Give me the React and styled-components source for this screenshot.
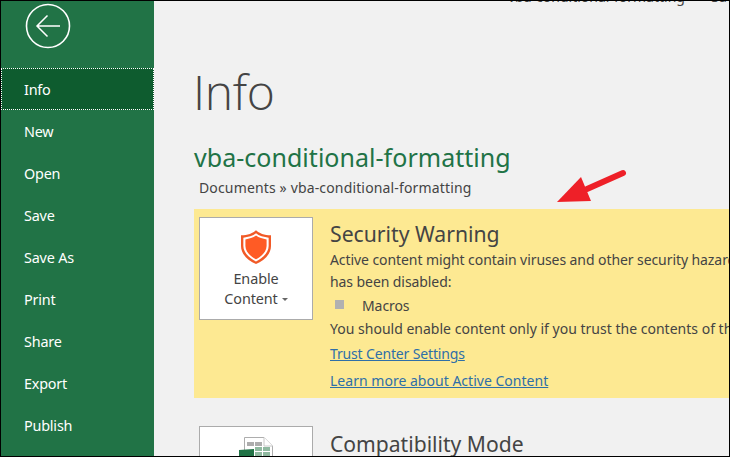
import React from "react";
import styled, { createGlobalStyle } from "styled-components";

const Global = createGlobalStyle`
  html, body { margin: 0; padding: 0; background: #000; }
  * { box-sizing: border-box; }
`;
const FONT = `"Noto Sans", "Open Sans", sans-serif`;

const Frame = styled.div`
  width: 730px; height: 457px; display: flex; overflow: hidden;
  padding: 1px; background: #000; font-family: ${FONT};
`;
const Sidebar = styled.nav`
  width: 153px; flex: none; background: #217346; display: flex; flex-direction: column;
`;
const BackWrap = styled.div`
  height: 67px; flex: none; padding: 2px 0 0 24px;
`;
const NavItem = styled.div`
  height: 42px; flex: none; display: flex; align-items: center; padding-left: 23px;
  color: #fff; font-size: 14.4px; letter-spacing: -0.2px;
  ${p => p.$active && `background: #0e5c2f; outline: 1px dotted #fff; outline-offset: -1px;`}
`;
const Main = styled.main`
  flex: 1; min-width: 0; background: #f1f1f1; overflow: hidden; display: flex; flex-direction: column;
`;
const TitleStrip = styled.div`
  height: 6px; flex: none; overflow: hidden; display: flex; align-items: flex-end;
  padding-left: 354px; color: #444; font-size: 14px; line-height: 14px;
`;
const TitleInner = styled.span`
  display: block; height: 14px; flex: none; margin-bottom: 3px; white-space: pre;
`;
const Content = styled.div`
  padding: 55px 0 0 40px; display: flex; flex-direction: column; width: 700px; position: relative;
`;
const H1 = styled.h1`
  margin: 0 0 0 -1px; font-weight: 300; font-family: "Open Sans", ${FONT}; font-size: 48px; line-height: 60px; color: #444; letter-spacing: -0.4px;
`;
const Doc = styled.div`
  margin-top: 18px; color: #217346; font-size: 25px; line-height: 34px; letter-spacing: 0.03px;
`;
const Crumb = styled.div`
  margin: 4px 0 0 5px; color: #444; font-size: 14px; line-height: 20px; letter-spacing: 0.15px;
`;
const Panel = styled.section`
  margin-top: 11px; height: 189px; background: #fde992; display: flex; padding: 8px 0 0 5px;
`;
const ActionButton = styled.div`
  width: 114px; height: 103px; flex: none; background: #fff; border: 1px solid #ababab;
  display: flex; flex-direction: column; align-items: center; padding-top: 12px;
  color: #444; font-size: 14.4px; line-height: 20px; text-align: center; letter-spacing: -0.1px;
`;
const ButtonLabel = styled.div`
  margin-top: 5px;
`;
const Caret = styled.span`
  display: inline-block; margin-left: 4px; vertical-align: 3px;
  border-left: 3px solid transparent; border-right: 3px solid transparent; border-top: 3px solid #666;
`;
const Details = styled.div`
  margin-left: 17px; width: 420px; white-space: nowrap; color: #444; flex: none;
`;
const WarnTitle = styled.div`
  font-size: 21.2px; line-height: 30px; margin-top: 2px;
`;
const Para = styled.div`
  font-size: 14px; line-height: 22px; letter-spacing: ${p => p.$track || -0.08}px;
  margin-top: ${p => p.$gap || 0}px;
`;
const Bullet = styled.div`
  display: flex; align-items: center; font-size: 14px; line-height: 18px; height: 18px; margin: 4px 0 0 5px; letter-spacing: -0.08px;
`;
const Square = styled.span`
  width: 9px; height: 9px; background: #b1b1b1; margin-right: 18px; flex: none; position: relative; top: -1.5px;
`;
const LinkText = styled.a`
  display: block; color: #2f6fa8; text-decoration: underline; font-size: 14px; line-height: 18px; letter-spacing: ${p => p.$track}px;
  margin-top: ${p => p.$gap}px;
`;
const Panel2 = styled.section`
  margin-top: 28px; display: flex; padding-left: 5px;
`;
const Button2 = styled.div`
  width: 114px; height: 60px; flex: none; background: #fff; border: 1px solid #ababab;
  display: flex; justify-content: center; padding-top: 10px;
`;
const Compat = styled.div`
  margin: 3px 0 0 17px; font-size: 21.1px; line-height: 30px; color: #444; white-space: nowrap;
`;
const ArrowMark = styled.svg`
  position: absolute; left: 396px; top: 158px;
`;

const Back = () => (
  <svg width="46" height="46" viewBox="0 0 46 46" fill="none" stroke="#fff" style={{ display: "block" }}>
    <circle cx="23" cy="23" r="21.5" strokeWidth="1.6" />
    <path d="M12.5 23H35M22.5 12.5 12 23l10.5 10.5" strokeWidth="1.5" />
  </svg>
);
const Shield = () => (
  <svg width="30" height="34" viewBox="0 0 32 36" style={{ flex: "none" }}>
    <path d="M16 0 C19 3 25 5.5 32 5.5 V17 C32 26 24 33 16 36 C8 33 0 26 0 17 V5.5 C7 5.5 13 3 16 0Z" fill="#f15a27" />
    <path d="M16 3.4 C19 6 24.5 7.6 29.5 8 V17 C29.5 24 22.5 30.5 16 33.4 C9.5 30.5 2.5 24 2.5 17 V8 C7.5 7.6 13 6 16 3.4Z" fill="#fff" />
    <path d="M16 5.8 C19 8 23.5 9.4 27.3 9.9 V17 C27.3 23 21.5 28.6 16 31 C10.5 28.6 4.7 23 4.7 17 V9.9 C8.5 9.4 13 8 16 5.8Z" fill="#ff5b25" />
  </svg>
);
const SheetIcon = () => (
  <svg width="34" height="40" viewBox="0 0 34 40" style={{ flex: "none" }}>
    <path d="M5.5.5H25L33.5 9V40H5.5Z" fill="#fff" stroke="#adadad" />
    <path d="M25 .5V9H33.5" fill="#fff" stroke="#c8c8c8" />
    <rect x="8" y="5" width="7" height="4" fill="#adadad" />
    <rect x="16" y="5" width="7" height="4" fill="#adadad" />
    <rect x="16" y="10" width="7" height="4" fill="#8fb9a0" />
    <rect x="24" y="10" width="7" height="4" fill="#8fb9a0" />
    <rect x="16" y="15" width="7" height="4" fill="#8fb9a0" />
    <rect x="24" y="15" width="7" height="4" fill="#8fb9a0" />
    <path d="M0 13 15 12V40H0Z" fill="#217346" />
  </svg>
);

const items = ["Info", "New", "Open", "Save", "Save As", "Print", "Share", "Export", "Publish"];

export default function App() {
  return (
    <>
      <Global />
      <Frame>
        <Sidebar>
          <BackWrap><Back /></BackWrap>
          {items.map((t, i) => <NavItem key={t} $active={i === 0}>{t}</NavItem>)}
        </Sidebar>
        <Main>
          <TitleStrip><TitleInner>{"vba-conditional-formatting   -   Saved"}</TitleInner></TitleStrip>
          <Content>
            <H1>Info</H1>
            <Doc>vba-conditional-formatting</Doc>
            <Crumb>Documents » vba-conditional-formatting</Crumb>
            <Panel>
              <ActionButton>
                <Shield />
                <ButtonLabel>Enable<br />Content<Caret /></ButtonLabel>
              </ActionButton>
              <Details>
                <WarnTitle>Security Warning</WarnTitle>
                <Para>Active content might contain viruses and other security hazards that</Para>
                <Para>has been disabled:</Para>
                <Bullet><Square />Macros</Bullet>
                <Para $gap={3} $track={0.01}>You should enable content only if you trust the contents of this file.</Para>
                <LinkText $gap={5} $track={-0.15}>Trust Center Settings</LinkText>
                <LinkText $gap={9} $track={0.02}>Learn more about Active Content</LinkText>
              </Details>
            </Panel>
            <Panel2>
              <Button2><SheetIcon /></Button2>
              <Compat>Compatibility Mode</Compat>
            </Panel2>
            <ArrowMark width="80" height="50" viewBox="0 0 80 50">
              <path d="M37 24 L73 8" stroke="#ee2028" strokeWidth="6" strokeLinecap="round" fill="none" />
              <path d="M7 37 L31 12 L41 36Z" fill="#ee2028" />
            </ArrowMark>
          </Content>
        </Main>
      </Frame>
    </>
  );
}
